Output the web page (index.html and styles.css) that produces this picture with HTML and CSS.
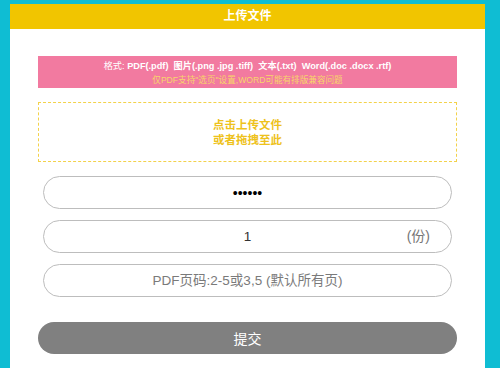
FILE: index.html
```html
<!DOCTYPE html>
<html lang="zh-CN">
<head>
<meta charset="utf-8">
<title>上传文件</title>
<link rel="stylesheet" href="styles.css">
</head>
<body>
<div class="card">
  <div class="header">上传文件</div>
  <div class="content">
    <div class="notice">
      <div class="notice-line1"><span class="label">格式:</span> <b>PDF(.pdf)</b>&nbsp; <b>图片(.png .jpg .tiff)</b>&nbsp; <b>文本(.txt)</b>&nbsp; <b>Word(.doc .docx .rtf)</b></div>
      <div class="notice-line2">仅PDF支持"选页"设置,WORD可能有排版兼容问题</div>
    </div>
    <div class="dropzone">
      <div>点击上传文件</div>
      <div>或者拖拽至此</div>
    </div>
    <div class="fields">
      <input class="field password" type="password" value="123456">
      <div class="field-wrap">
        <input class="field" type="text" value="1">
        <span class="suffix">(份)</span>
      </div>
      <input class="field" type="text" placeholder="PDF页码:2-5或3,5 (默认所有页)">
    </div>
    <button class="submit" type="button">提交</button>
  </div>
</div>
</body>
</html>
```

FILE: styles.css
```css
html, body {
  margin: 0;
  padding: 0;
}
body {
  background: #0fbdd3;
  font-family: "Liberation Sans", "Noto Sans CJK SC", sans-serif;
  height: 368px;
  overflow: hidden;
}
.card {
  margin: 4px 15px 0 10px;
  background: #fff;
  height: 364px;
}
.header {
  background: #f1c500;
  color: #fff;
  height: 25px;
  line-height: 25px;
  text-align: center;
  font-size: 12px;
  font-weight: bold;
}
.content {
  padding: 27px 28px 0 28px;
}
.notice {
  background: #f27aa0;
  height: 32px;
  box-sizing: border-box;
  padding-top: 3px;
  text-align: center;
  line-height: 14px;
}
.notice-line1 {
  color: #fff;
  font-size: 9.2px;
}
.notice-line1 .label {
  font-weight: normal;
}
.notice-line2 {
  color: #f7d56a;
  font-size: 8.6px;
}
.dropzone {
  margin-top: 14px;
  height: 60px;
  box-sizing: border-box;
  border: 1px dashed #f3d24a;
  display: flex;
  flex-direction: column;
  justify-content: center;
  align-items: center;
  color: #eec21c;
  font-size: 11.5px;
  font-weight: bold;
  line-height: 15px;
  padding-top: 2px;
}
.fields {
  margin: 14px 5px 0 5px;
  display: flex;
  flex-direction: column;
  gap: 11px;
}
.field-wrap {
  position: relative;
}
.field {
  display: block;
  width: 100%;
  box-sizing: border-box;
  height: 33px;
  border: 1px solid #bdbdbd;
  border-radius: 17px;
  background: #fff;
  text-align: center;
  font-family: "Liberation Sans", "Noto Sans CJK SC", sans-serif;
  font-size: 13.5px;
  color: #333;
  padding: 0 10px;
  outline: none;
}
.field::placeholder {
  color: #7a7a7a;
}
.password {
  color: #000;
  font-size: 14px;
}
.suffix {
  position: absolute;
  right: 22px;
  top: 0;
  line-height: 33px;
  font-size: 14px;
  color: #777;
}
.submit {
  display: block;
  width: 100%;
  margin-top: 25px;
  height: 32px;
  border: none;
  border-radius: 16px;
  background: #808080;
  color: #fff;
  font-family: "Liberation Sans", "Noto Sans CJK SC", sans-serif;
  font-size: 14px;
  padding: 0;
}
```
